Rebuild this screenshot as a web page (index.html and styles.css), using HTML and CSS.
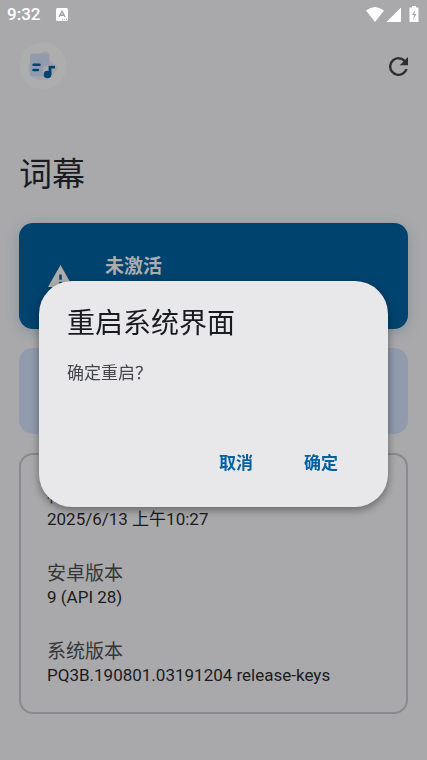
FILE: index.html
```html
<!DOCTYPE html>
<html lang="zh-CN">
<head>
<meta charset="utf-8">
<meta name="viewport" content="width=device-width, initial-scale=1">
<title>词幕</title>
<link rel="stylesheet" href="styles.css">
</head>
<body>
<header class="status">
  <span class="clock">9:32</span>
  <svg class="status-app" viewBox="0 0 12 13"><rect width="12" height="13" rx="1.5" fill="#fff"/><path d="M3 9 6 3.2 9 9M4 7.3h4" fill="none" stroke="#a0a0a2" stroke-width="1.4"/><path d="M6 11.3h5" stroke="#a9a9ab" stroke-dasharray="1 1"/></svg>
  <svg class="status-icons" viewBox="0 0 54 17"><path d="M0 4.500Q9 -2.500 18 4.500L9 16Z" fill="#fff"/><path d="M35 1.500V16H20.500Z" fill="#fff"/><path d="M46 0h4v1.500h2.500v14.500h-9V1.500H46Z" fill="#fff"/><path d="M49.500 3.500 45.800 9H48l-.8 4.500L50.500 8h-2.200Z" fill="#a9a9ab"/></svg>
</header>
<main class="page">
  <div class="toolbar">
    <svg class="logo" viewBox="0 0 48 48"><circle cx="24" cy="24" r="23.500" fill="#adadae"/><path d="M9 24c2-6 7-8 13-13 4-3 9-2 9 4 0 4 2 6 6 8 3 2 2 5-1 7-3 3-4 8-11 8-9 1-15-3-16-14Z" fill="#a4a5aa"/><rect x="11" y="11.500" width="19" height="23" rx="2" fill="#919bad"/><path d="M24 26q2-3 6-3v10h-6Z" fill="#a6a8ae"/><path d="M14.500 22.800h6M14.500 28h4.500" stroke="#00436f" stroke-width="2.400" stroke-linecap="round"/><circle cx="28.500" cy="32.500" r="3.800" fill="#00436f"/><path d="M31 33V25.200h5" fill="none" stroke="#00436f" stroke-width="2.800"/></svg>
    <button class="refresh" type="button" aria-label="刷新"><svg viewBox="4 4 16 16"><path d="M17.650 6.350A7.958 7.958 0 0 0 12 4a8 8 0 1 0 7.730 10h-2.080A6 6 0 1 1 12 6c1.660 0 3.140.690 4.220 1.780L13 11h7V4Z" fill="#2e2e30"/></svg></button>
  </div>
  <h1>词幕</h1>
  <section class="card state">
    <svg viewBox="0 0 24 21"><path d="M12 0 24 21H0Z" fill="#adadad"/><path d="M12 9v5M12 16v2.500" stroke="#00436f" stroke-width="2.400"/></svg>
    <h2>未激活</h2>
  </section>
  <section class="card notice"></section>
  <dl class="card info">
    <div><dt>构建时间</dt><dd>2025/6/13 上午10:27</dd></div>
    <div><dt>安卓版本</dt><dd>9 (API 28)</dd></div>
    <div><dt>系统版本</dt><dd>PQ3B.190801.03191204 release-keys</dd></div>
  </dl>
</main>
<div class="overlay">
  <section class="dialog" role="dialog" aria-modal="true" aria-labelledby="dialog-title">
    <h2 id="dialog-title">重启系统界面</h2>
    <p>确定重启？</p>
    <div class="actions"><button type="button">取消</button><button type="button">确定</button></div>
  </section>
</div>
</body>
</html>
```
FILE: styles.css
```css
* { box-sizing: border-box; }

body {
  margin: 0;
  min-height: 100vh;
  background: #a9a9ab;
  color: #1a1b1e;
  font-family: Roboto, "Noto Sans CJK SC", sans-serif;
}

h1, h2, p, dl, dd { margin: 0; font-weight: 400; }
svg { display: block; }
button { border: 0; padding: 0; background: none; font: inherit; }

.status {
  display: flex;
  align-items: center;
  height: 28px;
  padding: 0 7px;
  color: #fff;
}
.clock { font-size: 17px; font-weight: 500; line-height: 28px; }
.status-app { width: 12px; height: 13px; margin-left: 16px; }
.status-icons { width: 54px; height: 17px; margin-left: auto; }

.page { padding: 0 19px 46px; }

.toolbar {
  display: flex;
  align-items: center;
  justify-content: space-between;
  height: 76px;
}
.logo { width: 48px; height: 48px; }
.refresh svg { width: 19px; height: 19px; }

h1 { margin: 46px 0 23px; font-size: 33px; line-height: 50px; }

.card { border-radius: 14px; }
.state {
  display: flex;
  gap: 32px;
  height: 106px;
  padding: 30px 29px;
  background: #00436f;
  color: #adadad;
  box-shadow: 0 3px 14px rgba(0, 67, 111, 0.22);
}
.state svg { width: 25px; height: 22px; margin-top: 12px; }
.state h2 { font-size: 19px; font-weight: 700; line-height: 28px; }
.notice { height: 86px; margin: 19px 0; background: #919bad; }

.info {
  display: grid;
  gap: 32px;
  padding: 30px 26px 25px;
  border: 2px solid #8a8a8e;
}
.info dt { color: #343538; font-size: 19px; line-height: 22px; }
.info dd { font-size: 17px; line-height: 24px; }

.overlay {
  position: fixed;
  inset: 0;
  display: grid;
  align-items: center;
  padding: 28px 39px 0;
}
.dialog {
  padding: 23px 28px;
  border-radius: 33px;
  background: #e8e8ea;
  box-shadow: 0 3px 8px rgba(0, 0, 0, 0.4);
}
.dialog h2 { color: #1a1b1e; font-size: 28px; line-height: 40px; }
.dialog p { margin: 17px 0 56px; color: #46474a; font-size: 17px; line-height: 25px; }
.actions { display: flex; justify-content: flex-end; gap: 17px; padding-right: 5px; }
.actions button {
  padding: 0 17px;
  color: #0061a4;
  font-size: 17px;
  font-weight: 700;
  line-height: 42px;
}
```
